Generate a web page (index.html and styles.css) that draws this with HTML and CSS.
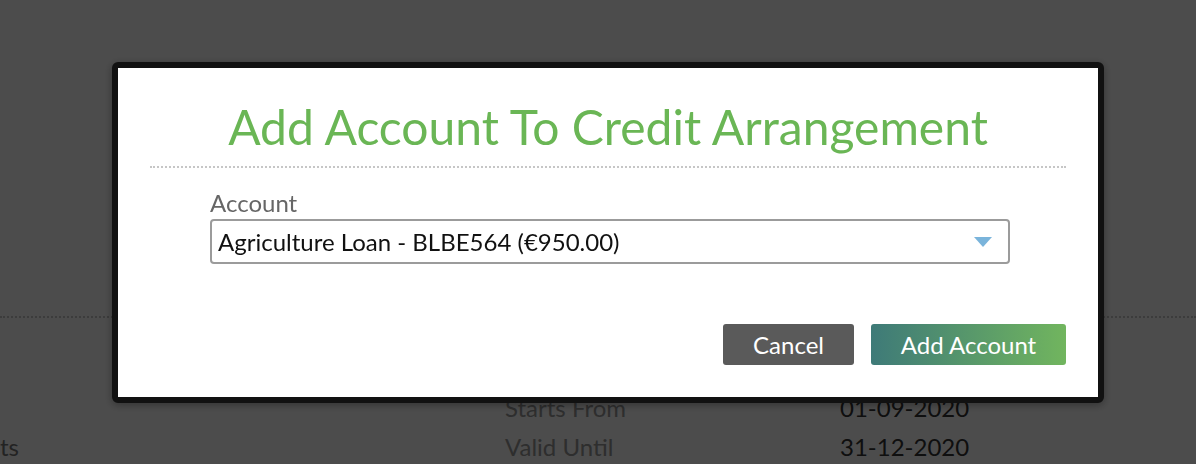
FILE: index.html
```html
<!DOCTYPE html>
<html lang="en">
<head>
<meta charset="utf-8">
<title>Add Account To Credit Arrangement</title>
<link rel="stylesheet" href="styles.css">
</head>
<body>
<div class="page">
  <div class="page-divider"></div>
  <div class="page-details">
    <div class="detail-row">
      <span class="detail-side"></span>
      <span class="detail-label">Starts From</span>
      <span class="detail-value">01-09-2020</span>
    </div>
    <div class="detail-row">
      <span class="detail-side">ts</span>
      <span class="detail-label">Valid Until</span>
      <span class="detail-value">31-12-2020</span>
    </div>
  </div>
</div>

<div class="overlay">
  <div class="modal">
    <h1 class="modal-title">Add Account To Credit Arrangement</h1>
    <div class="modal-body">
      <label class="field-label">Account</label>
      <div class="select">
        <span class="select-text">Agriculture Loan - BLBE564 (€950.00)</span>
        <svg class="select-arrow" width="18" height="10" viewBox="0 0 18 10"><polygon points="0,0 18,0 9,10" fill="#7ab4db"/></svg>
      </div>
    </div>
    <div class="modal-actions">
      <button class="btn btn-cancel">Cancel</button>
      <button class="btn btn-primary">Add Account</button>
    </div>
  </div>
</div>
</body>
</html>
```

FILE: styles.css
```css
* { box-sizing: border-box; }

html, body {
  margin: 0;
  padding: 0;
  width: 1196px;
  height: 464px;
  overflow: hidden;
}

body {
  background: #ffffff;
  font-family: Lato, "Open Sans", sans-serif;
  position: relative;
}

.page {
  padding-top: 316px;
}

.page-divider {
  border-top: 2px dotted #c8c8c8;
  width: 100%;
}

.page-details {
  padding-top: 70px;
}

.detail-row {
  display: grid;
  grid-template-columns: 505px 335px 1fr;
  height: 39px;
  line-height: 39px;
  font-size: 24px;
}

.detail-side { color: #777; }
.detail-label { color: #999; }
.detail-value { color: #333; }

.overlay {
  position: fixed;
  inset: 0;
  background: rgba(0, 0, 0, 0.7);
  padding: 62px 0 0 112px;
}

.modal {
  width: 992px;
  height: 341px;
  background: #fff;
  border: 6px solid #111;
  border-radius: 6px;
  box-shadow: 0 2px 8px rgba(0, 0, 0, 0.35);
  padding: 31px 32px 32px;
  display: flex;
  flex-direction: column;
}

.modal-title {
  margin: 0;
  font-weight: 400;
  font-size: 48px;
  line-height: 56px;
  color: #6ab655;
  text-align: center;
  padding-bottom: 11px;
  border-bottom: 2px dotted #c6c6c6;
}

.modal-body {
  margin: 21px 0 0 60px;
  width: 800px;
  display: flex;
  flex-direction: column;
}

.field-label {
  font-size: 24px;
  line-height: 28px;
  color: #666;
  margin-bottom: 2px;
}

.select {
  height: 45px;
  border: 2px solid #9b9b9b;
  border-radius: 4px;
  display: flex;
  align-items: center;
  justify-content: space-between;
  padding: 0 16px 0 6px;
}

.select-text {
  font-size: 24px;
  color: #111;
}

.select-arrow {
  display: block;
}

.modal-actions {
  margin-top: auto;
  display: flex;
  justify-content: flex-end;
  gap: 17px;
}

.btn {
  height: 41px;
  border: none;
  border-radius: 3px;
  font-family: Lato, "Open Sans", sans-serif;
  font-size: 24px;
  color: #fff;
  padding: 0;
  cursor: pointer;
}

.btn-cancel {
  width: 131px;
  background: #5a5a5a;
}

.btn-primary {
  width: 195px;
  background: linear-gradient(to right, #3e7a78, #71b55e);
}
```
